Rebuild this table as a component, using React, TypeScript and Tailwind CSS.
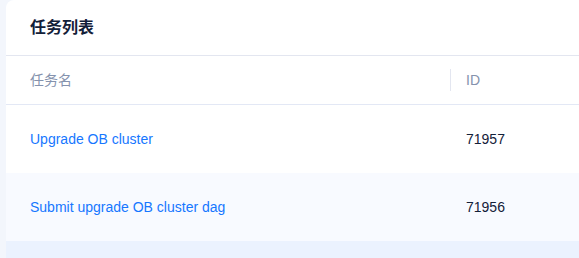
import React from 'react';

interface Task {
  id: number;
  name: string;
}

const tasks: Task[] = [
  { id: 71957, name: 'Upgrade OB cluster' },
  { id: 71956, name: 'Submit upgrade OB cluster dag' },
];

export default function App() {
  return (
    <div
      className="w-[579px] h-[258px] overflow-hidden bg-[#f3f6fc] flex flex-col"
      style={{ fontFamily: '"Liberation Sans", "Noto Sans CJK SC", sans-serif' }}
    >
      <div className="ml-[6px] w-[600px] bg-white rounded-tl-lg">
        <div className="h-[56px] flex items-center px-6 border-b border-[#e3e6f0]">
          <h2 className="text-[16px] font-bold text-[#132039]">任务列表</h2>
        </div>

        <div className="h-[49px] flex items-center border-b border-[#e3e8f5] text-[14px] text-[#8592ad]">
          <div className="w-[444px] pl-6">任务名</div>
          <div className="h-[22px] w-px bg-[#e3e6f0]" />
          <div className="pl-[15px]">ID</div>
        </div>

        {tasks.map((task, i) => (
          <div
            key={task.id}
            className={`h-[68px] flex items-center text-[14px] ${i % 2 === 1 ? 'bg-[#f8faff]' : 'bg-white'}`}
          >
            <div className="w-[444px] pl-6 text-[#1677ff]">{task.name}</div>
            <div className="pl-4 text-[#132039]">{task.id}</div>
          </div>
        ))}
      </div>
      <div className="flex-1 ml-[6px] bg-[#ebf2fe]" />
    </div>
  );
}
